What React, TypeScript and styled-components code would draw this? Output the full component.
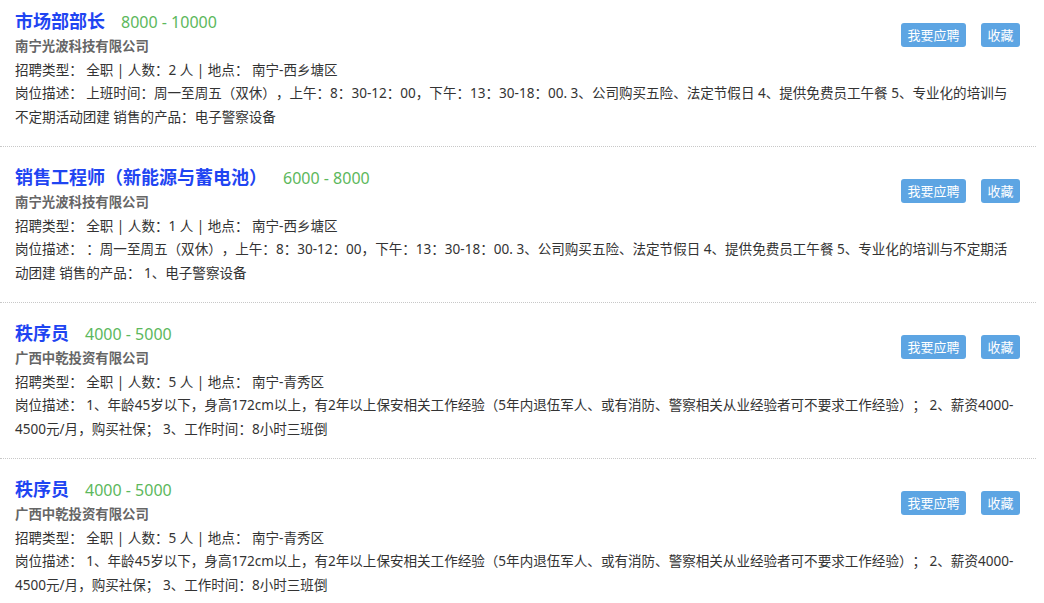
import React from "react";
import styled, { createGlobalStyle } from "styled-components";

interface Job {
  id: string;
  title: string;
  salary: string;
  company: string;
  count: number;
  place: string;
  desc: string;
}

const jobs: Job[] = [
  {
    id: "1",
    title: "市场部部长",
    salary: "8000 - 10000",
    company: "南宁光波科技有限公司",
    count: 2,
    place: "南宁-西乡塘区",
    desc: "上班时间：周一至周五（双休），上午：8：30-12：00，下午：13：30-18：00. 3、公司购买五险、法定节假日 4、提供免费员工午餐 5、专业化的培训与不定期活动团建 销售的产品：电子警察设备",
  },
  {
    id: "2",
    title: "销售工程师（新能源与蓄电池）",
    salary: "6000 - 8000",
    company: "南宁光波科技有限公司",
    count: 1,
    place: "南宁-西乡塘区",
    desc: "：周一至周五（双休），上午：8：30-12：00，下午：13：30-18：00. 3、公司购买五险、法定节假日 4、提供免费员工午餐 5、专业化的培训与不定期活动团建 销售的产品： 1、电子警察设备",
  },
  {
    id: "3",
    title: "秩序员",
    salary: "4000 - 5000",
    company: "广西中乾投资有限公司",
    count: 5,
    place: "南宁-青秀区",
    desc: "1、年龄45岁以下，身高172cm以上，有2年以上保安相关工作经验（5年内退伍军人、或有消防、警察相关从业经验者可不要求工作经验）； 2、薪资4000-4500元/月，购买社保； 3、工作时间：8小时三班倒",
  },
  {
    id: "4",
    title: "秩序员",
    salary: "4000 - 5000",
    company: "广西中乾投资有限公司",
    count: 5,
    place: "南宁-青秀区",
    desc: "1、年龄45岁以下，身高172cm以上，有2年以上保安相关工作经验（5年内退伍军人、或有消防、警察相关从业经验者可不要求工作经验）； 2、薪资4000-4500元/月，购买社保； 3、工作时间：8小时三班倒",
  },
];

const GlobalStyle = createGlobalStyle`
  html, body {
    margin: 0;
    padding: 0;
    background: #fff;
  }
  body {
    font-family: "Noto Sans", "Noto Sans CJK SC", sans-serif;
    color: #333;
    text-spacing-trim: space-all;
  }
`;

const List = styled.div`
  width: 1036px;
`;

const Card = styled.div`
  display: grid;
  grid-template-columns: 1fr auto;
  padding: 17px 16px 17px 15px;
  border-top: 1px dotted #c8c8c8;

  &:first-child {
    border-top: none;
    padding-top: 8px;
  }
`;

const Head = styled.div`
  grid-column: 1;
`;

const TitleRow = styled.div`
  display: flex;
  align-items: baseline;
  gap: 16px;
  height: 26px;
  line-height: 26px;
`;

const Title = styled.span`
  font-size: 18px;
  font-weight: bold;
  color: #1f45f2;
`;

const Salary = styled.span`
  font-size: 16px;
  color: #5cb85c;
`;

const Company = styled.div`
  font-size: 13.4px;
  font-weight: bold;
  color: #666;
  line-height: 24px;
`;

const Line = styled.div`
  font-size: 13.55px;
  line-height: 24px;
  color: #333;
`;

const Desc = styled(Line)`
  grid-column: 1 / span 2;
  line-height: 23.5px;
`;

const Actions = styled.div`
  grid-column: 2;
  display: flex;
  gap: 15px;
  align-self: start;
  margin-top: 15px;
`;

const Button = styled.button`
  height: 24px;
  padding: 0 6.5px;
  border: none;
  border-radius: 3px;
  background: #5da5e3;
  color: #fff;
  font-family: inherit;
  font-size: 13px;
  line-height: 24px;
  cursor: pointer;
`;

const JobCard: React.FC<{ job: Job }> = ({ job }) => (
  <Card>
    <Head>
      <TitleRow>
        <Title>{job.title}</Title>
        <Salary>{job.salary}</Salary>
      </TitleRow>
      <Company>{job.company}</Company>
      <Line>{`招聘类型： 全职 | 人数：${job.count} 人 | 地点： ${job.place}`}</Line>
    </Head>
    <Actions>
      <Button>我要应聘</Button>
      <Button>收藏</Button>
    </Actions>
    <Desc>{`岗位描述： ${job.desc}`}</Desc>
  </Card>
);

const App: React.FC = () => (
  <>
    <GlobalStyle />
    <List>
      {jobs.map((job) => (
        <JobCard key={job.id} job={job} />
      ))}
    </List>
  </>
);

export default App;
